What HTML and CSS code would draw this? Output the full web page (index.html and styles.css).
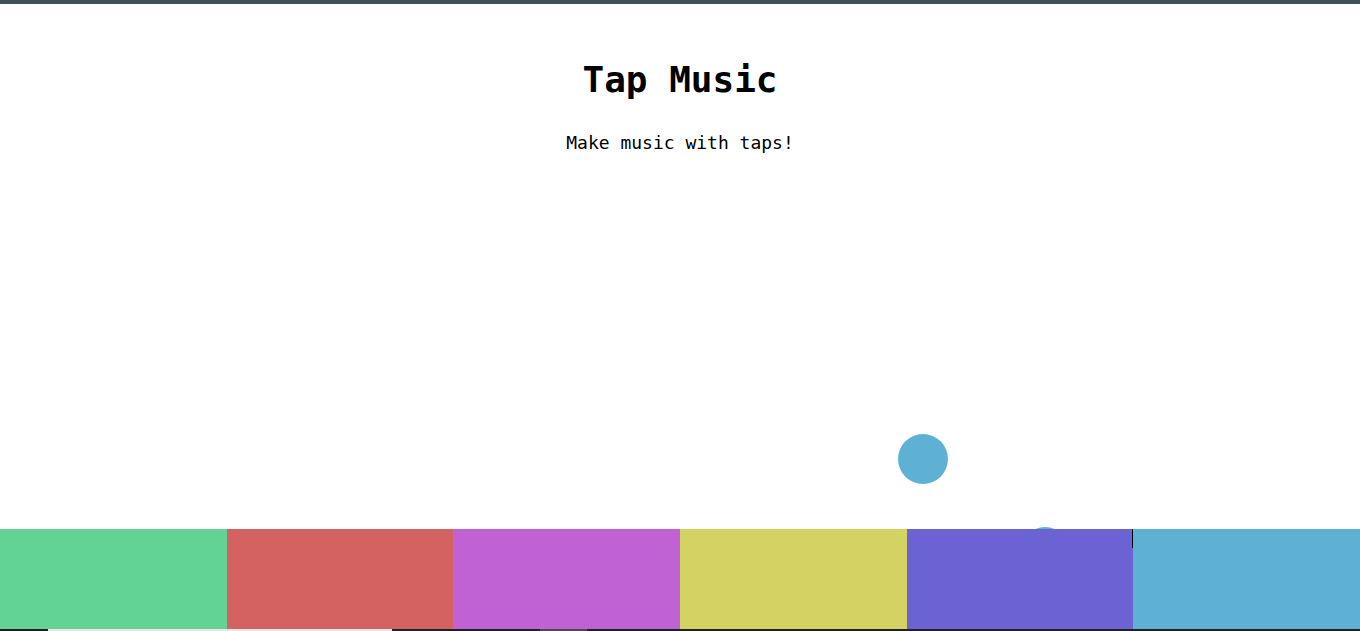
FILE: index.html
```html
<!DOCTYPE html>
<html lang="en">
<head>
<meta charset="utf-8">
<title>Tap Music</title>
<link rel="stylesheet" href="styles.css">
</head>
<body>
<div class="page">
  <header class="header">
    <h1 class="title">Tap Music</h1>
    <p class="subtitle">Make music with taps!</p>
  </header>
  <main class="stage">
    <div class="bubble bubble-a"></div>
    <div class="bubble bubble-b"></div>
  </main>
  <div class="pads">
    <div class="pad pad-1"></div>
    <div class="pad pad-2"></div>
    <div class="pad pad-3"></div>
    <div class="pad pad-4"></div>
    <div class="pad pad-5"><span class="caret"></span></div>
    <div class="pad pad-6"></div>
  </div>
  <div class="strip">
    <span class="seg seg-dark1"></span>
    <span class="seg seg-light"></span>
    <span class="seg seg-dark2"></span>
    <span class="seg seg-grey"></span>
    <span class="seg seg-dark3"></span>
  </div>
</div>
</body>
</html>
```

FILE: styles.css
```css
html, body {
  margin: 0;
  padding: 0;
  background: #ffffff;
}

.page {
  height: 100vh;
  display: flex;
  flex-direction: column;
  border-top: 4px solid #3e5159;
  box-sizing: border-box;
  font-family: "DejaVu Sans Mono", "Liberation Mono", monospace;
  color: #000;
  overflow: hidden;
}

.header {
  text-align: center;
}

.title {
  margin: 55px 0 0;
  font-size: 36px;
  line-height: 42px;
  font-weight: bold;
}

.subtitle {
  margin: 31px 0 0;
  font-size: 18px;
  line-height: 21px;
}

.stage {
  flex: 1;
  position: relative;
}

.bubble {
  position: absolute;
  width: 50px;
  height: 50px;
  border-radius: 50%;
  background: #5fb1d3;
}

.bubble-a {
  left: 898px;
  top: 281px;
}

.bubble-b {
  left: 1020px;
  top: 374px;
}

.pads {
  position: relative;
  z-index: 1;
  display: flex;
  height: 100px;
  flex-shrink: 0;
}

.pad {
  flex: 1;
  position: relative;
}

.pad-1 { background: #62d394; }
.pad-2 { background: #d46261; }
.pad-3 { background: #c062d4; }
.pad-4 { background: #d4d262; }
.pad-5 { background: #6b62d4; }
.pad-6 { background: #5fb1d3; }

.caret {
  position: absolute;
  right: 0;
  top: 0;
  width: 1px;
  height: 19px;
  background: #000;
}

.strip {
  display: flex;
  height: 2px;
  flex-shrink: 0;
  background: #1f2223;
}

.seg { display: block; height: 2px; }
.seg-dark1 { width: 48px; background: #1f2223; }
.seg-light { width: 344px; background: #e6e6e6; }
.seg-dark2 { width: 148px; background: #1f2223; }
.seg-grey { width: 47px; background: #4a4a4d; }
.seg-dark3 { flex: 1; background: #1f2223; }
```
